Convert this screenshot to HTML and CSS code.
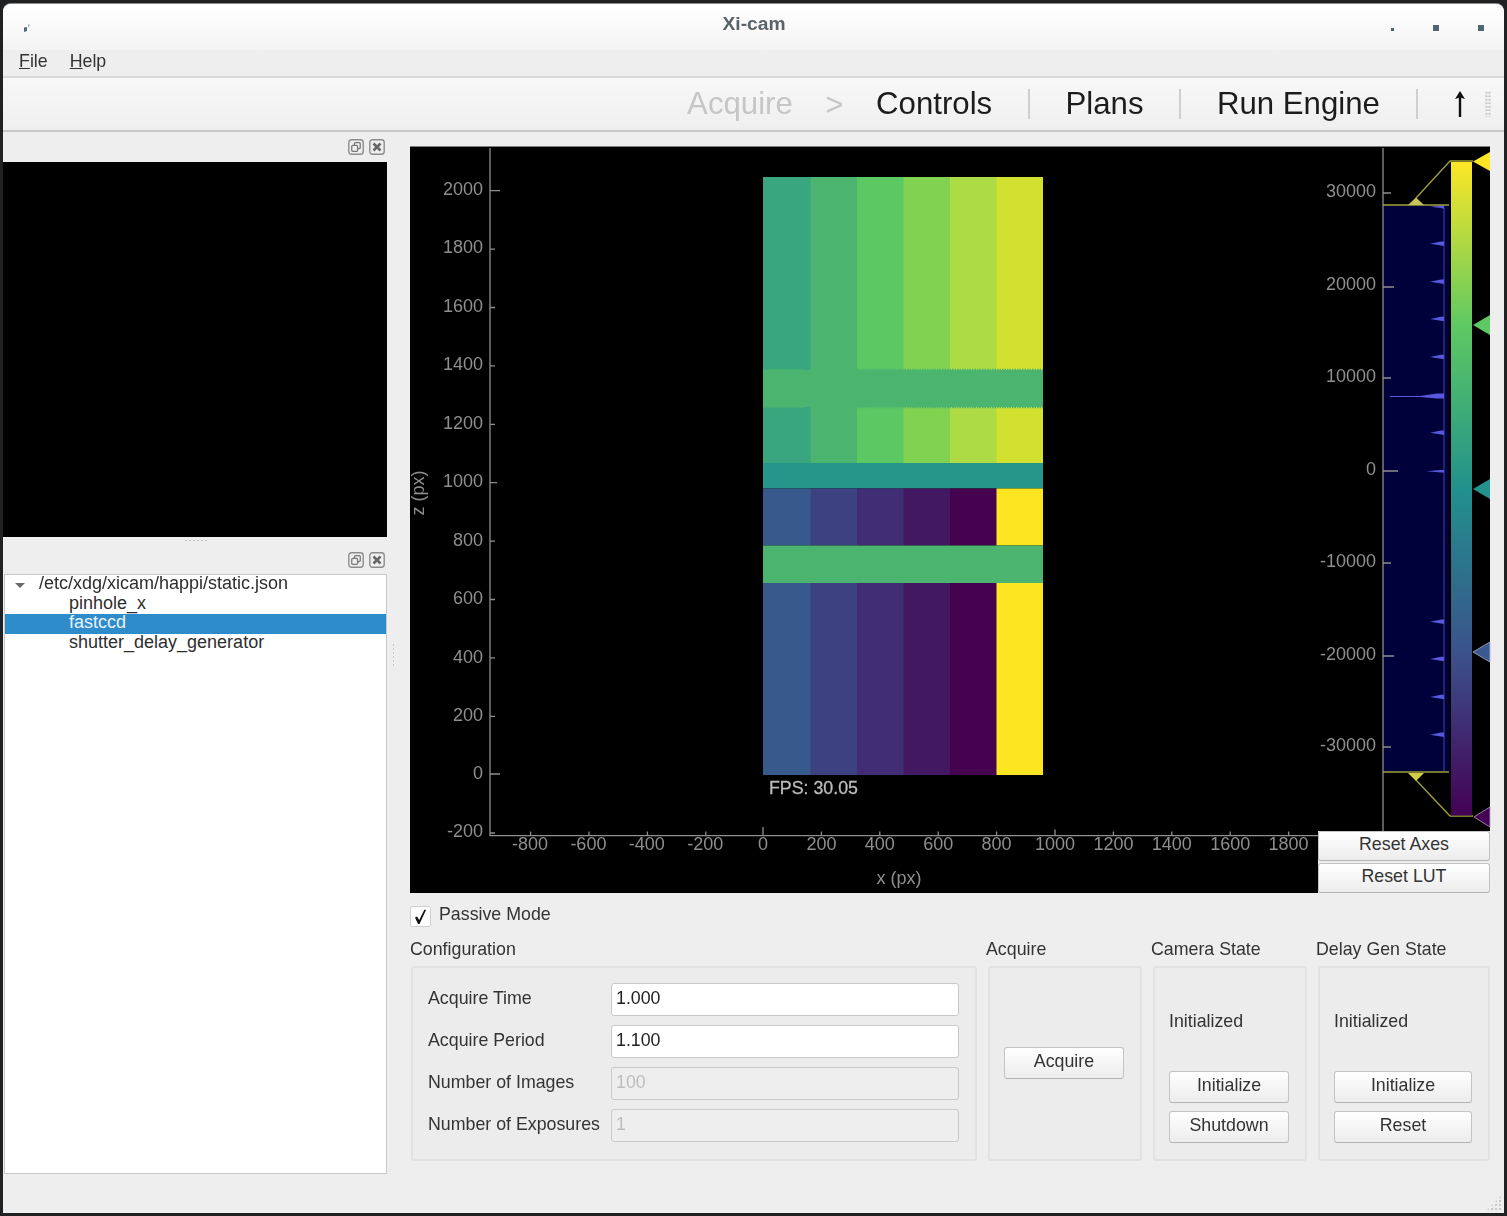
FILE: index.html
```html
<!DOCTYPE html>
<html lang="en">
<head>
<meta charset="utf-8">
<title>Xi-cam</title>
<link rel="stylesheet" href="styles.css">
</head>
<body>
<div class="window">
  <header class="titlebar">
    <div class="title-left">
      <svg class="app-icon" width="8" height="10" viewBox="0 0 8 10"><path d="M1 3.5 L4 3 L4 7 L1 8 Z M5.5 0.5 L6.5 0.5 L6 3 L5.5 3 Z" fill="#4f6b78"/></svg>
    </div>
    <div class="title-text">Xi-cam</div>
    <div class="title-buttons">
      <span class="win-dot win-min"></span>
      <span class="win-dot"></span>
      <span class="win-dot"></span>
    </div>
  </header>

  <nav class="menubar">
    <span class="menu-item"><u>F</u>ile</span>
    <span class="menu-item"><u>H</u>elp</span>
  </nav>

  <div class="toolbar">
    <span class="tool tool-off">Acquire</span>
    <span class="tool tool-off tool-chevron">&gt;</span>
    <span class="tool">Controls</span>
    <span class="tool-sep"></span>
    <span class="tool">Plans</span>
    <span class="tool-sep"></span>
    <span class="tool">Run Engine</span>
    <span class="tool-sep"></span>
    <svg class="tool-arrow" width="14" height="30" viewBox="0 0 14 30"><path d="M7 4 V28" stroke="#111" stroke-width="2.4" fill="none"/><path d="M7 2 L12 10 L7 8.5 L2 10 Z" fill="#111"/></svg>
    <span class="tool-grip"></span>
  </div>

  <main class="main">
    <aside class="left">
      <div class="dock-head">
        <svg class="dock-btn" width="16" height="16" viewBox="0 0 15 15"><rect x=".75" y=".75" width="13.5" height="13.5" rx="2.5" fill="none" stroke="#8c8c8c" stroke-width="1.3"/><rect x="6" y="3.5" width="5.5" height="5.5" rx="1" fill="none" stroke="#777" stroke-width="1.2"/><rect x="3.5" y="6" width="5.5" height="5.5" rx="1" fill="#eee" stroke="#777" stroke-width="1.2"/></svg>
        <svg class="dock-btn" width="16" height="16" viewBox="0 0 15 15"><rect x=".75" y=".75" width="13.5" height="13.5" rx="2.5" fill="none" stroke="#8c8c8c" stroke-width="1.3"/><path d="M4.2 4.2 L10.8 10.8 M10.8 4.2 L4.2 10.8" stroke="#666" stroke-width="2.4"/></svg>
      </div>
      <div class="preview"></div>
      <div class="split-h"><span class="grip-h"></span></div>
      <div class="dock-head dock-head-low">
        <svg class="dock-btn" width="16" height="16" viewBox="0 0 15 15"><rect x=".75" y=".75" width="13.5" height="13.5" rx="2.5" fill="none" stroke="#8c8c8c" stroke-width="1.3"/><rect x="6" y="3.5" width="5.5" height="5.5" rx="1" fill="none" stroke="#777" stroke-width="1.2"/><rect x="3.5" y="6" width="5.5" height="5.5" rx="1" fill="#eee" stroke="#777" stroke-width="1.2"/></svg>
        <svg class="dock-btn" width="16" height="16" viewBox="0 0 15 15"><rect x=".75" y=".75" width="13.5" height="13.5" rx="2.5" fill="none" stroke="#8c8c8c" stroke-width="1.3"/><path d="M4.2 4.2 L10.8 10.8 M10.8 4.2 L4.2 10.8" stroke="#666" stroke-width="2.4"/></svg>
      </div>
      <div class="tree">
        <div class="tree-row tree-root"><span class="caret"></span>/etc/xdg/xicam/happi/static.json</div>
        <div class="tree-row">pinhole_x</div>
        <div class="tree-row tree-sel">fastccd</div>
        <div class="tree-row">shutter_delay_generator</div>
      </div>
    </aside>

    <div class="split-v"><span class="grip-v"></span></div>

    <section class="right">
      <div class="plot">
        <svg class="plot-svg" width="1080" height="746" viewBox="410 147 1080 746">
          <defs>
            <linearGradient id="viridis" x1="0" y1="0" x2="0" y2="1">
              <stop offset="0" stop-color="#fde725"/>
              <stop offset=".25" stop-color="#5ec962"/>
              <stop offset=".5" stop-color="#21918c"/>
              <stop offset=".75" stop-color="#3b528b"/>
              <stop offset="1" stop-color="#440154"/>
            </linearGradient>
          </defs>

          <!-- image -->
          <rect class="c1" x="763" y="177" width="48" height="193"/>
          <rect class="c2" x="810.5" y="177" width="47" height="193"/>
          <rect class="c3" x="857" y="177" width="47" height="193"/>
          <rect class="c4" x="903.5" y="177" width="47" height="193"/>
          <rect class="c5" x="950" y="177" width="47" height="193"/>
          <rect class="c6" x="996.5" y="177" width="46.5" height="193"/>
          <rect class="c1" x="763" y="407" width="48" height="56"/>
          <rect class="c2" x="810.5" y="407" width="47" height="56"/>
          <rect class="c3" x="857" y="407" width="47" height="56"/>
          <rect class="c4" x="903.5" y="407" width="47" height="56"/>
          <rect class="c5" x="950" y="407" width="47" height="56"/>
          <rect class="c6" x="996.5" y="407" width="46.5" height="56"/>
          <rect class="band" x="763" y="370" width="280" height="37"/>
          <path class="jag" d="M763 369.5 H804 M857 369.5 H1043 M763 407.5 H804 M857 407.5 H1043"/>
          <rect class="teal" x="763" y="463" width="280" height="25.5"/>
          <rect class="d1" x="763" y="488.5" width="48" height="57"/>
          <rect class="d2" x="810.5" y="488.5" width="47" height="57"/>
          <rect class="d3" x="857" y="488.5" width="47" height="57"/>
          <rect class="d4" x="903.5" y="488.5" width="47" height="57"/>
          <rect class="d5" x="950" y="488.5" width="47" height="57"/>
          <rect class="d6" x="996.5" y="488.5" width="46.5" height="57"/>
          <rect class="band" x="763" y="545.5" width="280" height="37.5"/>
          <rect class="d1" x="763" y="583" width="48" height="192"/>
          <rect class="d2" x="810.5" y="583" width="47" height="192"/>
          <rect class="d3" x="857" y="583" width="47" height="192"/>
          <rect class="d4" x="903.5" y="583" width="47" height="192"/>
          <rect class="d5" x="950" y="583" width="47" height="192"/>
          <rect class="d6" x="996.5" y="583" width="46.5" height="192"/>

          <!-- main axes -->
          <path class="axis" d="M490 148 V835.7 H1318"/>
          <path class="axis" d="M490 190.7 H500 M490 249.1 H495 M490 307.5 H495 M490 365.9 H495 M490 424.3 H495 M490 482.7 H497 M490 541.1 H495 M490 599.5 H495 M490 657.9 H495 M490 716.3 H495 M490 774 H500 M490 833 H495"/>
          <path class="axis" d="M530.6 831.5 V835 M589 831.5 V835 M647.4 831.5 V835 M705.8 831.5 V835 M763 827 V835 M821.4 831.5 V835 M879.8 831.5 V835 M938.2 831.5 V835 M996.6 831.5 V835 M1055 829.5 V835 M1113.4 831.5 V835 M1171.8 831.5 V835 M1230.2 831.5 V835 M1288.6 831.5 V835"/>
          <g class="lab-end">
            <text x="483" y="194.5">2000</text>
            <text x="483" y="253">1800</text>
            <text x="483" y="311.5">1600</text>
            <text x="483" y="370">1400</text>
            <text x="483" y="428.5">1200</text>
            <text x="483" y="487">1000</text>
            <text x="483" y="545.5">800</text>
            <text x="483" y="604">600</text>
            <text x="483" y="662.5">400</text>
            <text x="483" y="721">200</text>
            <text x="483" y="778.5">0</text>
            <text x="483" y="836.5">-200</text>
          </g>
          <g class="lab-mid">
            <text x="530" y="850">-800</text>
            <text x="588.4" y="850">-600</text>
            <text x="646.8" y="850">-400</text>
            <text x="705.2" y="850">-200</text>
            <text x="763" y="850">0</text>
            <text x="821.4" y="850">200</text>
            <text x="879.8" y="850">400</text>
            <text x="938.2" y="850">600</text>
            <text x="996.6" y="850">800</text>
            <text x="1055" y="850">1000</text>
            <text x="1113.4" y="850">1200</text>
            <text x="1171.8" y="850">1400</text>
            <text x="1230.2" y="850">1600</text>
            <text x="1288.6" y="850">1800</text>
            <text x="899" y="884">x (px)</text>
            <text x="0" y="0" transform="translate(424 493) rotate(-90)">z (px)</text>
          </g>
          <text class="fps" x="769" y="794">FPS: 30.05</text>

          <!-- histogram -->
          <rect class="navy" x="1383" y="205" width="66" height="567"/>
          <path class="hist-line" d="M1444 207 V771"/>
          <path class="spike" d="M1430 206.7 L1441 205.5 H1444 V209 L1441 208 Z"/>
          <path class="spike" d="M1430 243.7 L1441 241.5 H1444 V246 L1441 245.5 Z"/>
          <path class="spike" d="M1430 281.7 L1441 279.5 H1444 V284 L1441 283.5 Z"/>
          <path class="spike" d="M1430 319 L1441 316.8 H1444 V321.3 L1441 320.8 Z"/>
          <path class="spike" d="M1430 357 L1441 354.8 H1444 V359.3 L1441 358.8 Z"/>
          <path class="spike" d="M1390 396 H1420 L1437 393.5 H1444 V398.5 H1437 L1420 397 H1390 Z"/>
          <path class="spike" d="M1430 432.7 L1441 430.5 H1444 V435 L1441 434.5 Z"/>
          <path class="spike" d="M1426 471.3 L1441 470 H1444 V472.5 L1441 472.5 Z"/>
          <path class="spike" d="M1430 621.7 L1441 619.5 H1444 V624 L1441 623.5 Z"/>
          <path class="spike" d="M1430 659 L1441 656.8 H1444 V661.3 L1441 660.8 Z"/>
          <path class="spike" d="M1430 697 L1441 694.8 H1444 V699.3 L1441 698.8 Z"/>
          <path class="spike" d="M1430 734.7 L1441 732.5 H1444 V737 L1441 736.5 Z"/>
          <path class="axis" d="M1383 148 V832"/>
          <path class="axis" d="M1383 193 H1391 M1383 287 H1394 M1383 378 H1391 M1383 471 H1398 M1383 563 H1391 M1383 656 H1394 M1383 747 H1391"/>
          <g class="lab-end">
            <text x="1376" y="197">30000</text>
            <text x="1376" y="290">20000</text>
            <text x="1376" y="382">10000</text>
            <text x="1376" y="475">0</text>
            <text x="1376" y="566.5">-10000</text>
            <text x="1376" y="659.5">-20000</text>
            <text x="1376" y="751">-30000</text>
          </g>
          <path class="lut-line" d="M1383 205 H1449 M1416 198 L1450 161 H1473 M1383 772 H1449 M1416 780 L1450 816 H1473"/>
          <path class="lut-knob" d="M1408 205 L1416 197.5 L1424 205 Z"/>
          <path class="lut-knob lut-knob-low" d="M1408 773 H1424 L1416 781 Z"/>
          <rect x="1451" y="162" width="21" height="653.5" fill="url(#viridis)"/>
          <path class="h-yellow" d="M1473 161.5 L1490 152 V171 Z"/>
          <path class="h-green" d="M1473 325 L1490 315 V335 Z"/>
          <path class="h-teal" d="M1473 489 L1490 479 V499 Z"/>
          <path class="h-blue" d="M1473 652 L1490 642 V662 Z"/>
          <path class="h-purple" d="M1474 817 L1490 807 V827 Z"/>
        </svg>
        <div class="reset-btns">
          <button class="btn" type="button">Reset Axes</button>
          <button class="btn" type="button">Reset LUT</button>
        </div>
      </div>

      <label class="passive">
        <span class="check"><svg width="19" height="19" viewBox="0 0 19 19"><path d="M4 10.5 L6 9.5 L8.2 13 L13.5 2.5 L15 3 L8.5 17 L7 17 Z" fill="#111"/></svg></span>
        Passive Mode
      </label>

      <div class="groups">
        <div class="group">
          <div class="group-title">Configuration</div>
          <div class="box box-config">
            <div class="field"><span class="field-label">Acquire Time</span><input class="input" type="text" value="1.000"></div>
            <div class="field"><span class="field-label">Acquire Period</span><input class="input" type="text" value="1.100"></div>
            <div class="field"><span class="field-label">Number of Images</span><input class="input" type="text" value="100" disabled></div>
            <div class="field"><span class="field-label">Number of Exposures</span><input class="input" type="text" value="1" disabled></div>
          </div>
        </div>
        <div class="group">
          <div class="group-title">Acquire</div>
          <div class="box box-inset box-center"><button class="btn btn-acquire" type="button">Acquire</button></div>
        </div>
        <div class="group">
          <div class="group-title">Camera State</div>
          <div class="box box-inset box-state">
            <div class="state-text">Initialized</div>
            <div class="state-btns">
              <button class="btn" type="button">Initialize</button>
              <button class="btn" type="button">Shutdown</button>
            </div>
          </div>
        </div>
        <div class="group">
          <div class="group-title">Delay Gen State</div>
          <div class="box box-inset box-state">
            <div class="state-text">Initialized</div>
            <div class="state-btns">
              <button class="btn" type="button">Initialize</button>
              <button class="btn" type="button">Reset</button>
            </div>
          </div>
        </div>
      </div>
    </section>
  </main>
  <span class="size-grip"></span>
</div>
</body>
</html>
```
FILE: styles.css
```css
* { box-sizing: border-box; }
html, body { margin: 0; height: 100%; }
body {
  width: 1507px;
  height: 1216px;
  overflow: hidden;
  background: #1f2123;
  font-family: "Liberation Sans", Arial, sans-serif;
  font-size: 17.8px;
  color: #333;
}
.window {
  position: relative;
  margin: 4px 3px 0;
  width: 1501px;
  height: 1209px;
  background: #eeeeee;
  border-radius: 8px 8px 0 0;
  box-shadow: 0 -1px 0 #8b8b8b;
  overflow: hidden;
  display: flex;
  flex-direction: column;
  filter: blur(.45px);
}

/* title bar */
.titlebar {
  height: 46px;
  flex: none;
  display: grid;
  grid-template-columns: 1fr auto 1fr;
  align-items: center;
  background: linear-gradient(#ffffff, #f4f4f4);
}
.title-left { padding-left: 20px; display: flex; align-items: center; }
.app-icon { display: block; margin-top: 3px; }
.title-text { font-size: 19.2px; font-weight: 700; color: #5a6468; padding-bottom: 6px; padding-left: 1px; }
.title-buttons {
  display: flex;
  justify-content: flex-end;
  align-items: center;
  gap: 39px;
  padding-right: 20px;
  margin-top: 1px;
}
.win-dot { width: 6px; height: 6px; background: #4d6672; }
.win-min { width: 3px; height: 3px; margin-top: 3px; }

/* menu */
.menubar {
  height: 28px;
  flex: none;
  display: flex;
  align-items: center;
  gap: 22px;
  padding: 0 0 4px 16px;
  background: #eeeeee;
  border-bottom: 2px solid #d9d9d9;
}

/* toolbar */
.toolbar {
  height: 54px;
  flex: none;
  display: flex;
  align-items: center;
  justify-content: flex-end;
  gap: 35.7px;
  padding-right: 13px;
  background: linear-gradient(#f8f8f8, #efefef);
  border-bottom: 2px solid #c8c8c8;
}
.tool { font-size: 31.2px; color: #1c1c1c; line-height: 36px; }
.tool-off { color: #c6c6c6; }
.tool-chevron { margin: 0 -3px; font-size: 30.5px; }
.tool-sep { width: 2px; height: 30px; background: #cfcfcf; }
.tool-arrow { display: block; }
.tool-grip {
  width: 6px;
  height: 26px;
  margin-left: -18px;
  background-image: radial-gradient(circle, #c4c4c4 1px, transparent 1.2px);
  background-size: 3px 3.5px;
}

/* main area */
.main { flex: 1; min-height: 0; display: flex; }
.left { width: 385px; flex: none; display: flex; flex-direction: column; }
.dock-head {
  height: 30px;
  flex: none;
  display: flex;
  justify-content: flex-end;
  align-items: center;
  gap: 5px;
  padding-right: 3px;
}
.dock-head-low { height: 26px; padding-bottom: 2px; }
.dock-btn { display: block; }
.preview { height: 375px; flex: none; background: #000; border-right: 1px solid #eee; }
.split-h { height: 11px; flex: none; display: flex; justify-content: center; }
.grip-h {
  width: 24px;
  height: 3px;
  margin-top: 2px;
  background-image: radial-gradient(circle, #bdbdbd .9px, transparent 1.1px);
  background-size: 4px 3px;
}
.tree {
  height: 600px;
  flex: none;
  margin-left: 1px;
  width: 383px;
  background: #fff;
  border: 1px solid #c9c9c9;
  font-size: 18px;
}
.tree-row { height: 19.6px; line-height: 16px; padding-left: 64px; white-space: nowrap; color: #2e2e2e; }
.tree-root { padding-left: 34px; position: relative; }
.tree-sel { background: #2f8ccb; color: #e8f2fa; }
.caret {
  position: absolute;
  left: 10px;
  top: 8px;
  border-left: 5.5px solid transparent;
  border-right: 5.5px solid transparent;
  border-top: 5.5px solid #6a6a6a;
}
.split-v { width: 22px; flex: none; display: flex; justify-content: center; padding-left: 1px; }
.grip-v {
  width: 3px;
  height: 24px;
  margin: 511px 0 0 -12px;
  background-image: radial-gradient(circle, #c8c8c8 .9px, transparent 1.1px);
  background-size: 3px 4px;
}
.right { width: 1080px; flex: none; }

/* plot */
.plot {
  position: relative;
  margin-top: 14px;
  border-top: 1px solid #7d7d7d;
  height: 747px;
}
.plot-svg { display: block; background: #000; overflow: visible; }
.plot-svg text { font-family: "Liberation Sans", Arial, sans-serif; font-size: 18px; fill: #8e8e8e; }
.lab-end { text-anchor: end; }
.lab-mid { text-anchor: middle; }
.plot-svg .fps { fill: #bcbcbc; stroke: #bcbcbc; stroke-width: .3px; font-size: 17.8px; }
.axis { stroke: #8f8f8f; stroke-width: 1.3; fill: none; }
.c1 { fill: #39a67f; }
.c2 { fill: #4bb570; }
.c3 { fill: #5cc863; }
.c4 { fill: #82d252; }
.c5 { fill: #acdb45; }
.c6 { fill: #d2e02f; }
.band { fill: #4bb570; }
.jag { stroke: #4bb570; stroke-width: 1.5; stroke-dasharray: 1.5 1; fill: none; }
.teal { fill: #26958a; }
.d1 { fill: #38598c; }
.d2 { fill: #3c4180; }
.d3 { fill: #402d74; }
.d4 { fill: #431863; }
.d5 { fill: #45024f; }
.d6 { fill: #fde522; }
.navy { fill: #00003a; }
.hist-line { stroke: #3a3a8c; stroke-width: 1.2; fill: none; }
.spike { fill: #5858dc; }
.lut-line { stroke: #a0a03a; stroke-width: 1.3; fill: none; }
.lut-knob { fill: #c4c45a; }
.lut-knob-low { fill: #cfcf45; }
.h-yellow { fill: #fde725; }
.h-green { fill: #5ec962; }
.h-teal { fill: #24938b; }
.h-blue { fill: #3b5a94; stroke: #a9b3cc; stroke-width: .8; }
.h-purple { fill: #440154; stroke: #b9a0c0; stroke-width: .8; }
.reset-btns {
  position: absolute;
  right: 0;
  bottom: 0;
  width: 172px;
  height: 62px;
  display: flex;
  flex-direction: column;
  gap: 2px;
  background: #eee;
}
.reset-btns .btn { height: 30px; }

/* buttons */
.btn {
  display: block;
  width: 100%;
  height: 32px;
  padding: 0 0 4px;
  border: 1px solid #c4c4c4;
  border-bottom-color: #b4b4b4;
  border-radius: 3px;
  background: linear-gradient(#ffffff, #ececec);
  font: inherit;
  color: #333;
}

/* passive mode */
.passive { display: flex; align-items: flex-start; gap: 8px; margin-top: 12px; height: 24px; line-height: 18px; }
.check {
  width: 21px;
  height: 21px;
  margin-top: 1px;
  background: #fff;
  border: 1px solid #cfcfcf;
  border-radius: 2px;
  display: flex;
  align-items: center;
  justify-content: center;
}
.check svg { display: block; }

/* groups */
.groups {
  display: grid;
  grid-template-columns: 567px 156px 156px 174px;
  column-gap: 9px;
  margin-top: 8px;
}
.group-title { height: 29px; line-height: 24px; white-space: nowrap; }
.box {
  height: 195px;
  margin-left: 1px;
  background: #ececec;
  border: 2px solid #e2e2e2;
  border-radius: 3px;
}
.box-inset { margin-left: 2px; }
.box-config { padding: 15px 15px 0; display: flex; flex-direction: column; gap: 9px; }
.field { display: flex; height: 33px; }
.field-label { width: 183px; flex: none; line-height: 30px; white-space: nowrap; }
.input {
  width: 348px;
  height: 33px;
  padding: 0 4px 3px;
  border: 1.5px solid #c9c9c9;
  border-radius: 3px;
  background: #fff;
  font: inherit;
  color: #222;
}
.input:disabled { background: #eee; color: #bdbdbd; }
.box-center { display: flex; align-items: center; justify-content: center; padding: 0 2px 1px 0; }
.btn-acquire { width: 120px; }
.box-state { display: flex; flex-direction: column; padding: 0 16px 16px 14px; }
.state-text { margin-top: 42px; line-height: 22px; }
.state-btns { margin-top: auto; display: flex; flex-direction: column; gap: 8px; }
.size-grip {
  position: absolute;
  right: 2px;
  bottom: 2px;
  width: 16px;
  height: 16px;
  background-image: radial-gradient(circle, #c8c8c8 .9px, transparent 1.1px);
  background-size: 4px 4px;
  clip-path: polygon(100% 0, 100% 100%, 0 100%);
}
```
